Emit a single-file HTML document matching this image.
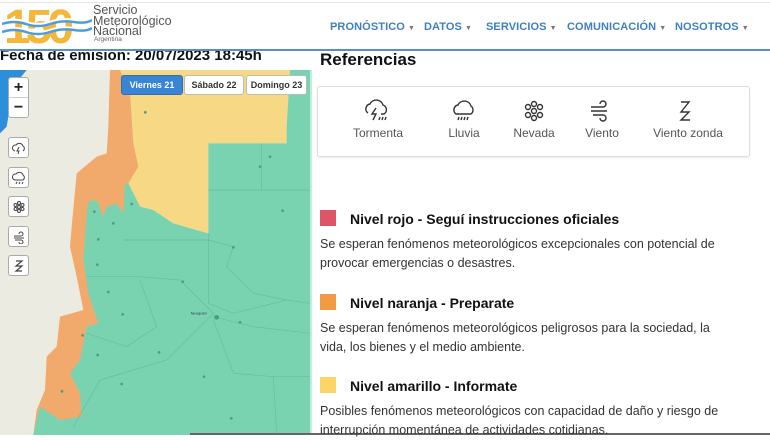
<!DOCTYPE html>
<html><head><meta charset="utf-8"><style>
*{margin:0;padding:0;box-sizing:border-box}
body{width:770px;height:435px;overflow:hidden;background:#fff;font-family:"Liberation Sans",Arial,sans-serif;position:relative}
.abs{position:absolute}
.nav{top:21px;font-size:11px;font-weight:bold;color:#3f7fc1;letter-spacing:.1px;white-space:nowrap}
.nav span{font-size:7px;color:#777;margin-left:3px}
.btn{position:absolute;top:75px;height:20px;border:1px solid #bbb;border-radius:3px;background:#fff;font-size:9px;font-weight:bold;color:#333;text-align:center;line-height:18px}
.ib{position:absolute;left:8px;width:21px;height:21px;border:1px solid #aaa;border-radius:3px;background:#fff}
.ib svg{position:absolute;left:3px;top:3px}
.ref{position:absolute;top:98px;text-align:center;font-size:12px;color:#555;width:90px}
.sq{position:absolute;left:320px;width:16px;height:16px}
.lt{position:absolute;left:350px;font-size:14px;font-weight:bold;color:#111}
.ld{position:absolute;left:320px;font-size:12.5px;color:#333;line-height:19px;width:400px}
</style></head><body>
<div class="abs" style="left:0;top:2px;width:770px;height:1px;background:#e6e6e6"></div>
<!-- logo -->
<svg class="abs" style="left:2px;top:2px" width="90" height="44" viewBox="0 0 90 44">
<text x="2" y="41" font-family="Liberation Sans" font-weight="bold" font-size="48" fill="#f3b73a" letter-spacing="-5">150</text>
<path d="M0 20 Q12 16 24 20 T48 20 T72 18 T90 16" stroke="#fff" stroke-width="2.5" fill="none"/>
<path d="M0 22 Q12 18 24 22 T48 22 T72 20 T90 18" stroke="#4a9ee0" stroke-width="2.5" fill="none"/>
<path d="M0 28 Q12 24 24 28 T48 28 T72 26 T90 24" stroke="#fff" stroke-width="2" fill="none"/>
<path d="M0 30 Q12 26 24 30 T48 30 T72 28 T90 26" stroke="#4a9ee0" stroke-width="2.5" fill="none"/>
</svg>
<div class="abs" style="left:93px;top:5px;font-size:12.5px;line-height:10.5px;color:#555">Servicio<br>Meteorológico<br>Nacional</div>
<div class="abs" style="left:94px;top:36px;font-size:6.5px;color:#666">Argentina</div>
<div class="abs nav" style="left:330px">PRONÓSTICO<span>▼</span></div>
<div class="abs nav" style="left:424px">DATOS<span>▼</span></div>
<div class="abs nav" style="left:486px">SERVICIOS<span>▼</span></div>
<div class="abs nav" style="left:567px">COMUNICACIÓN<span>▼</span></div>
<div class="abs nav" style="left:675px">NOSOTROS<span>▼</span></div>
<div class="abs" style="left:0;top:50px;width:310px;height:20px;overflow:hidden"><div style="position:absolute;left:0;top:-3px;font-size:15px;font-weight:bold;color:#111;white-space:nowrap">Fecha de emision: 20/07/2023 18:45h</div></div>
<div class="abs" style="left:0;top:49px;width:770px;height:2px;background:#5b8cc4"></div>
<!-- map -->
<svg class="abs" style="left:0;top:70px" width="310" height="365" viewBox="0 30 930 1095" preserveAspectRatio="none">
<rect x="0" y="30" width="930" height="1095" fill="#ecebe2"/>
<path d="M0 30 L80 30 L40 80 L20 200 L0 220Z" fill="#2b8fd9"/>
<path d="M330 30 L325 200 L320 280 L290 290 L230 340 L215 500 L210 560 L230 650 L250 750 L180 770 L170 860 L140 890 L135 990 L110 1050 L100 1125 L420 1125 L420 30Z" fill="#f2aa6c"/>
<path d="M360 30 L390 100 L400 250 L415 320 L385 370 L420 440 L460 450 L520 490 L625 520 L625 250 L860 250 L860 200 L870 30Z" fill="#f7d985"/>
<path d="M385 370 L420 440 L460 450 L520 490 L625 520 L625 250 L860 250 L860 200 L870 30 L930 30 L930 1125 L100 1125 L120 1040 L180 1080 L245 1070 L240 1000 L210 940 L240 900 L260 800 L295 790 L265 700 L250 600 L260 460 L265 425 L290 420 L310 470 L320 440 L350 430 L370 460 L375 370Z" fill="#7ad3b0"/>
<g stroke="#62b896" stroke-width="2" fill="none" opacity=".8">
<path d="M625 520 L625 730 L700 760 L860 720 L930 730"/>
<path d="M625 390 L930 390"/>
<path d="M370 540 L625 540 L700 560 L680 620 L760 700 L860 720"/>
<path d="M260 650 L420 650 L540 660 L640 760 L500 900 L300 960 L220 1100"/>
<path d="M640 770 L760 800 L930 820"/>
<path d="M420 660 L470 800 L380 860 L260 820"/>
<path d="M640 780 L700 940 L820 950 L930 950"/>
<path d="M785 250 L785 390"/>
<path d="M820 950 L830 1125"/>
</g>
<g fill="#4a9c7c"><circle cx="810" cy="290" r="4"/><circle cx="780" cy="320" r="4"/><circle cx="848" cy="452" r="4"/><circle cx="395" cy="432" r="4"/><circle cx="283" cy="455" r="4"/><circle cx="340" cy="490" r="4"/><circle cx="295" cy="538" r="4"/><circle cx="292" cy="614" r="4"/><circle cx="548" cy="665" r="4"/><circle cx="325" cy="696" r="4"/><circle cx="368" cy="763" r="4"/><circle cx="720" cy="787" r="4"/><circle cx="650" cy="772" r="7"/><circle cx="248" cy="826" r="4"/><circle cx="293" cy="885" r="4"/><circle cx="477" cy="877" r="4"/><circle cx="612" cy="950" r="4"/><circle cx="365" cy="972" r="4"/><circle cx="186" cy="994" r="4"/><circle cx="694" cy="1075" r="4"/><circle cx="436" cy="157" r="4"/><circle cx="700" cy="562" r="4"/></g>
<text x="572" y="763" font-size="12" fill="#335">Neuquén</text>
</svg>
<div class="btn" style="left:121px;width:62px;background:#3a84d6;border-color:#2f6fb5;color:#fff">Viernes 21</div>
<div class="btn" style="left:184px;width:60px">Sábado 22</div>
<div class="btn" style="left:246px;width:61px">Domingo 23</div>
<div class="abs" style="left:8px;top:77px;width:21px;height:41px;border:1px solid #aaa;border-radius:3px;background:#fff;font-size:16px;font-weight:bold;text-align:center;line-height:19px;color:#222">+<div style="border-top:1px solid #ccc">−</div></div>
<div class="ib" style="top:137px"><svg width="14" height="14" fill="none" stroke="#444" stroke-width="1"><path d="M3 10 a3 3 0 0 1 1-6 a4 4 0 0 1 7 1 a3 3 0 0 1 0 5 M7 6 l-2 4 h2 l-1 3"/></svg></div>
<div class="ib" style="top:167px"><svg width="14" height="14" fill="none" stroke="#444" stroke-width="1"><path d="M3 9 a3 3 0 0 1 1-6 a4 4 0 0 1 7 1 a3 3 0 0 1 0 5z M5 11 l-1 2 M8 11 l-1 2 M11 11 l-1 2"/></svg></div>
<div class="ib" style="top:196px"><svg width="14" height="14" fill="none" stroke="#444" stroke-width="1"><circle cx="7" cy="7" r="1.5"/><circle cx="7" cy="3" r="1.5"/><circle cx="7" cy="11" r="1.5"/><circle cx="3.5" cy="5" r="1.5"/><circle cx="10.5" cy="5" r="1.5"/><circle cx="3.5" cy="9" r="1.5"/><circle cx="10.5" cy="9" r="1.5"/></svg></div>
<div class="ib" style="top:226px"><svg width="14" height="14" fill="none" stroke="#444" stroke-width="1"><path d="M2 6 h7 a2 2 0 1 0 -2-2 M2 8 h10 M3 10 h6 a2 2 0 1 1 -2 2"/></svg></div>
<div class="ib" style="top:255px"><svg width="14" height="14" fill="none" stroke="#444" stroke-width="1.2"><path d="M4 2 h6 l-6 5 h6 M4 7 h6 l-6 5 h6"/></svg></div>
<div class="abs" style="left:310px;top:70px;width:2px;height:365px;background:#bfeedd"></div>
<div class="abs" style="left:190px;top:433px;width:580px;height:2px;background:#666"></div>
<!-- right -->
<div class="abs" style="left:320px;top:50px;font-size:17px;font-weight:bold;color:#111">Referencias</div>
<div class="abs" style="left:317px;top:86px;width:433px;height:71px;border:1px solid #ddd;border-radius:3px;box-shadow:0 1px 2px rgba(0,0,0,.08)"></div>
<svg class="abs" style="left:310px;top:97px" width="460" height="30" fill="none" stroke="#333" stroke-width="1.4">
<path d="M58 16 a5 5 0 0 1 2-9 a7 7 0 0 1 13 1 a5 5 0 0 1 1 9 h-3"/><path d="M66 11 l-4 6 h4 l-3 6" /><path d="M70 20 l-1 3 M73 20 l-1 3 M76 20 l-1 3"/>
<path d="M146 17 a5 5 0 0 1 2-9 a7 7 0 0 1 13 1 a5 5 0 0 1 0 8 z"/><path d="M149 20 l-1 3 M152 20 l-1 3 M155 20 l-1 3 M158 20 l-1 3"/>
<circle cx="224" cy="14" r="2.5"/><circle cx="224" cy="7" r="2.5"/><circle cx="224" cy="21" r="2.5"/><circle cx="218" cy="10" r="2.5"/><circle cx="230" cy="10" r="2.5"/><circle cx="218" cy="18" r="2.5"/><circle cx="230" cy="18" r="2.5"/>
<path d="M281 10 h12 a3 3 0 1 0 -3-3 M281 14 h16 M283 18 h10 a3 3 0 1 1 -3 3"/>
<path d="M371 5 h8 l-8 10 h8 M371 15 l8 0 l-8 8 h9"/>
</svg>
<div class="ref" style="left:333px;top:126px">Tormenta</div>
<div class="ref" style="left:419px;top:126px">Lluvia</div>
<div class="ref" style="left:489px;top:126px">Nevada</div>
<div class="ref" style="left:557px;top:126px">Viento</div>
<div class="ref" style="left:643px;top:126px">Viento zonda</div>
<div class="sq" style="top:210px;background:#dd5566"></div>
<div class="lt" style="top:211px">Nivel rojo - Seguí instrucciones oficiales</div>
<div class="ld" style="top:235px;width:410px">Se esperan fenómenos meteorológicos excepcionales con potencial de provocar emergencias o desastres.</div>
<div class="sq" style="top:294px;background:#f39a45"></div>
<div class="lt" style="top:295px">Nivel naranja - Preparate</div>
<div class="ld" style="top:319px">Se esperan fenómenos meteorológicos peligrosos para la sociedad, la vida, los bienes y el medio ambiente.</div>
<div class="sq" style="top:377px;background:#fdd466"></div>
<div class="lt" style="top:378px">Nivel amarillo - Informate</div>
<div class="ld" style="top:402px;width:410px">Posibles fenómenos meteorológicos con capacidad de daño y riesgo de interrupción momentánea de actividades cotidianas.</div>
</body></html>
